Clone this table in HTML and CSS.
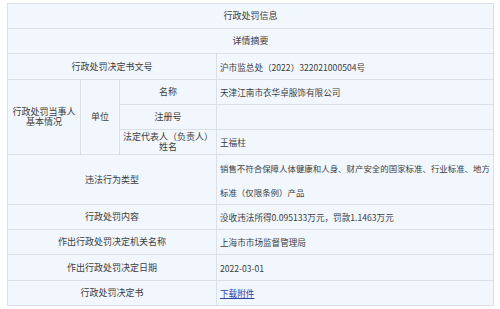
FILE: index.html
```html
<!DOCTYPE html>
<html lang="zh-CN">
<head>
<meta charset="utf-8">
<title>行政处罚信息</title>
<link rel="stylesheet" href="styles.css">
</head>
<body>
<table class="info">
  <colgroup>
    <col class="c1"><col class="c2"><col class="c3"><col class="c4">
  </colgroup>
  <tr class="r25"><td class="title" colspan="4">行政处罚信息</td></tr>
  <tr class="r25"><td class="title" colspan="4">详情摘要</td></tr>
  <tr class="r26"><td class="label" colspan="3">行政处罚决定书文号</td><td class="value">沪市监总处（2022）322021000504号</td></tr>
  <tr class="r25">
    <td class="label multi" rowspan="3">行政处罚当事人<br>基本情况</td>
    <td class="label" rowspan="3">单位</td>
    <td class="label">名称</td>
    <td class="value">天津江南市衣华卓服饰有限公司</td>
  </tr>
  <tr class="r25"><td class="label">注册号</td><td class="value"></td></tr>
  <tr class="r25"><td class="label multi">法定代表人（负责人）<br>姓名</td><td class="value">王福柱</td></tr>
  <tr class="r50"><td class="label" colspan="3">违法行为类型</td><td class="value long">销售不符合保障人体健康和人身、财产安全的国家标准、行业标准、地方<br>标准（仅限条例）产品</td></tr>
  <tr class="r25"><td class="label" colspan="3">行政处罚内容</td><td class="value">没收违法所得0.095133万元，罚款1.1463万元</td></tr>
  <tr class="r25"><td class="label" colspan="3">作出行政处罚决定机关名称</td><td class="value">上海市市场监督管理局</td></tr>
  <tr class="r26"><td class="label" colspan="3">作出行政处罚决定日期</td><td class="value">2022-03-01</td></tr>
  <tr class="r25"><td class="label" colspan="3">行政处罚决定书</td><td class="value"><a class="link" href="#">下载附件</a></td></tr>
</table>
</body>
</html>
```
FILE: styles.css
```css
html, body {
  margin: 0;
  background: #ffffff;
}
body {
  padding: 3px 7px 0 7px;
  font-family: "Noto Sans CJK SC", "Noto Sans", sans-serif;
  color: #3d3d3d;
}
.info {
  width: 486px;
  table-layout: fixed;
  border-collapse: collapse;
  background: #f2f7fe;
}
.c1 { width: 73px; }
.c2 { width: 39px; }
.c3 { width: 97px; }
.c4 { width: 277px; }
.info td {
  border: 1px solid #d9e0ea;
  padding: 0;
  font-size: 9px;
  line-height: 10px;
  white-space: nowrap;
  overflow: hidden;
}
.info td.multi {
  font-family: "Liberation Sans", "Noto Sans CJK SC", sans-serif;
  line-height: 10.5px;
}
.r25 { height: 25px; }
.r26 { height: 26px; }
.r50 { height: 50px; }
.title, .label {
  text-align: center;
}
.info td.value {
  text-align: left;
  padding-left: 3px;
  font-size: 8.6px;
}
.info td.long {
  font-size: 8.45px;
  line-height: 24px;
}
.link {
  color: #2b3fa8;
  text-decoration: underline;
}
```
